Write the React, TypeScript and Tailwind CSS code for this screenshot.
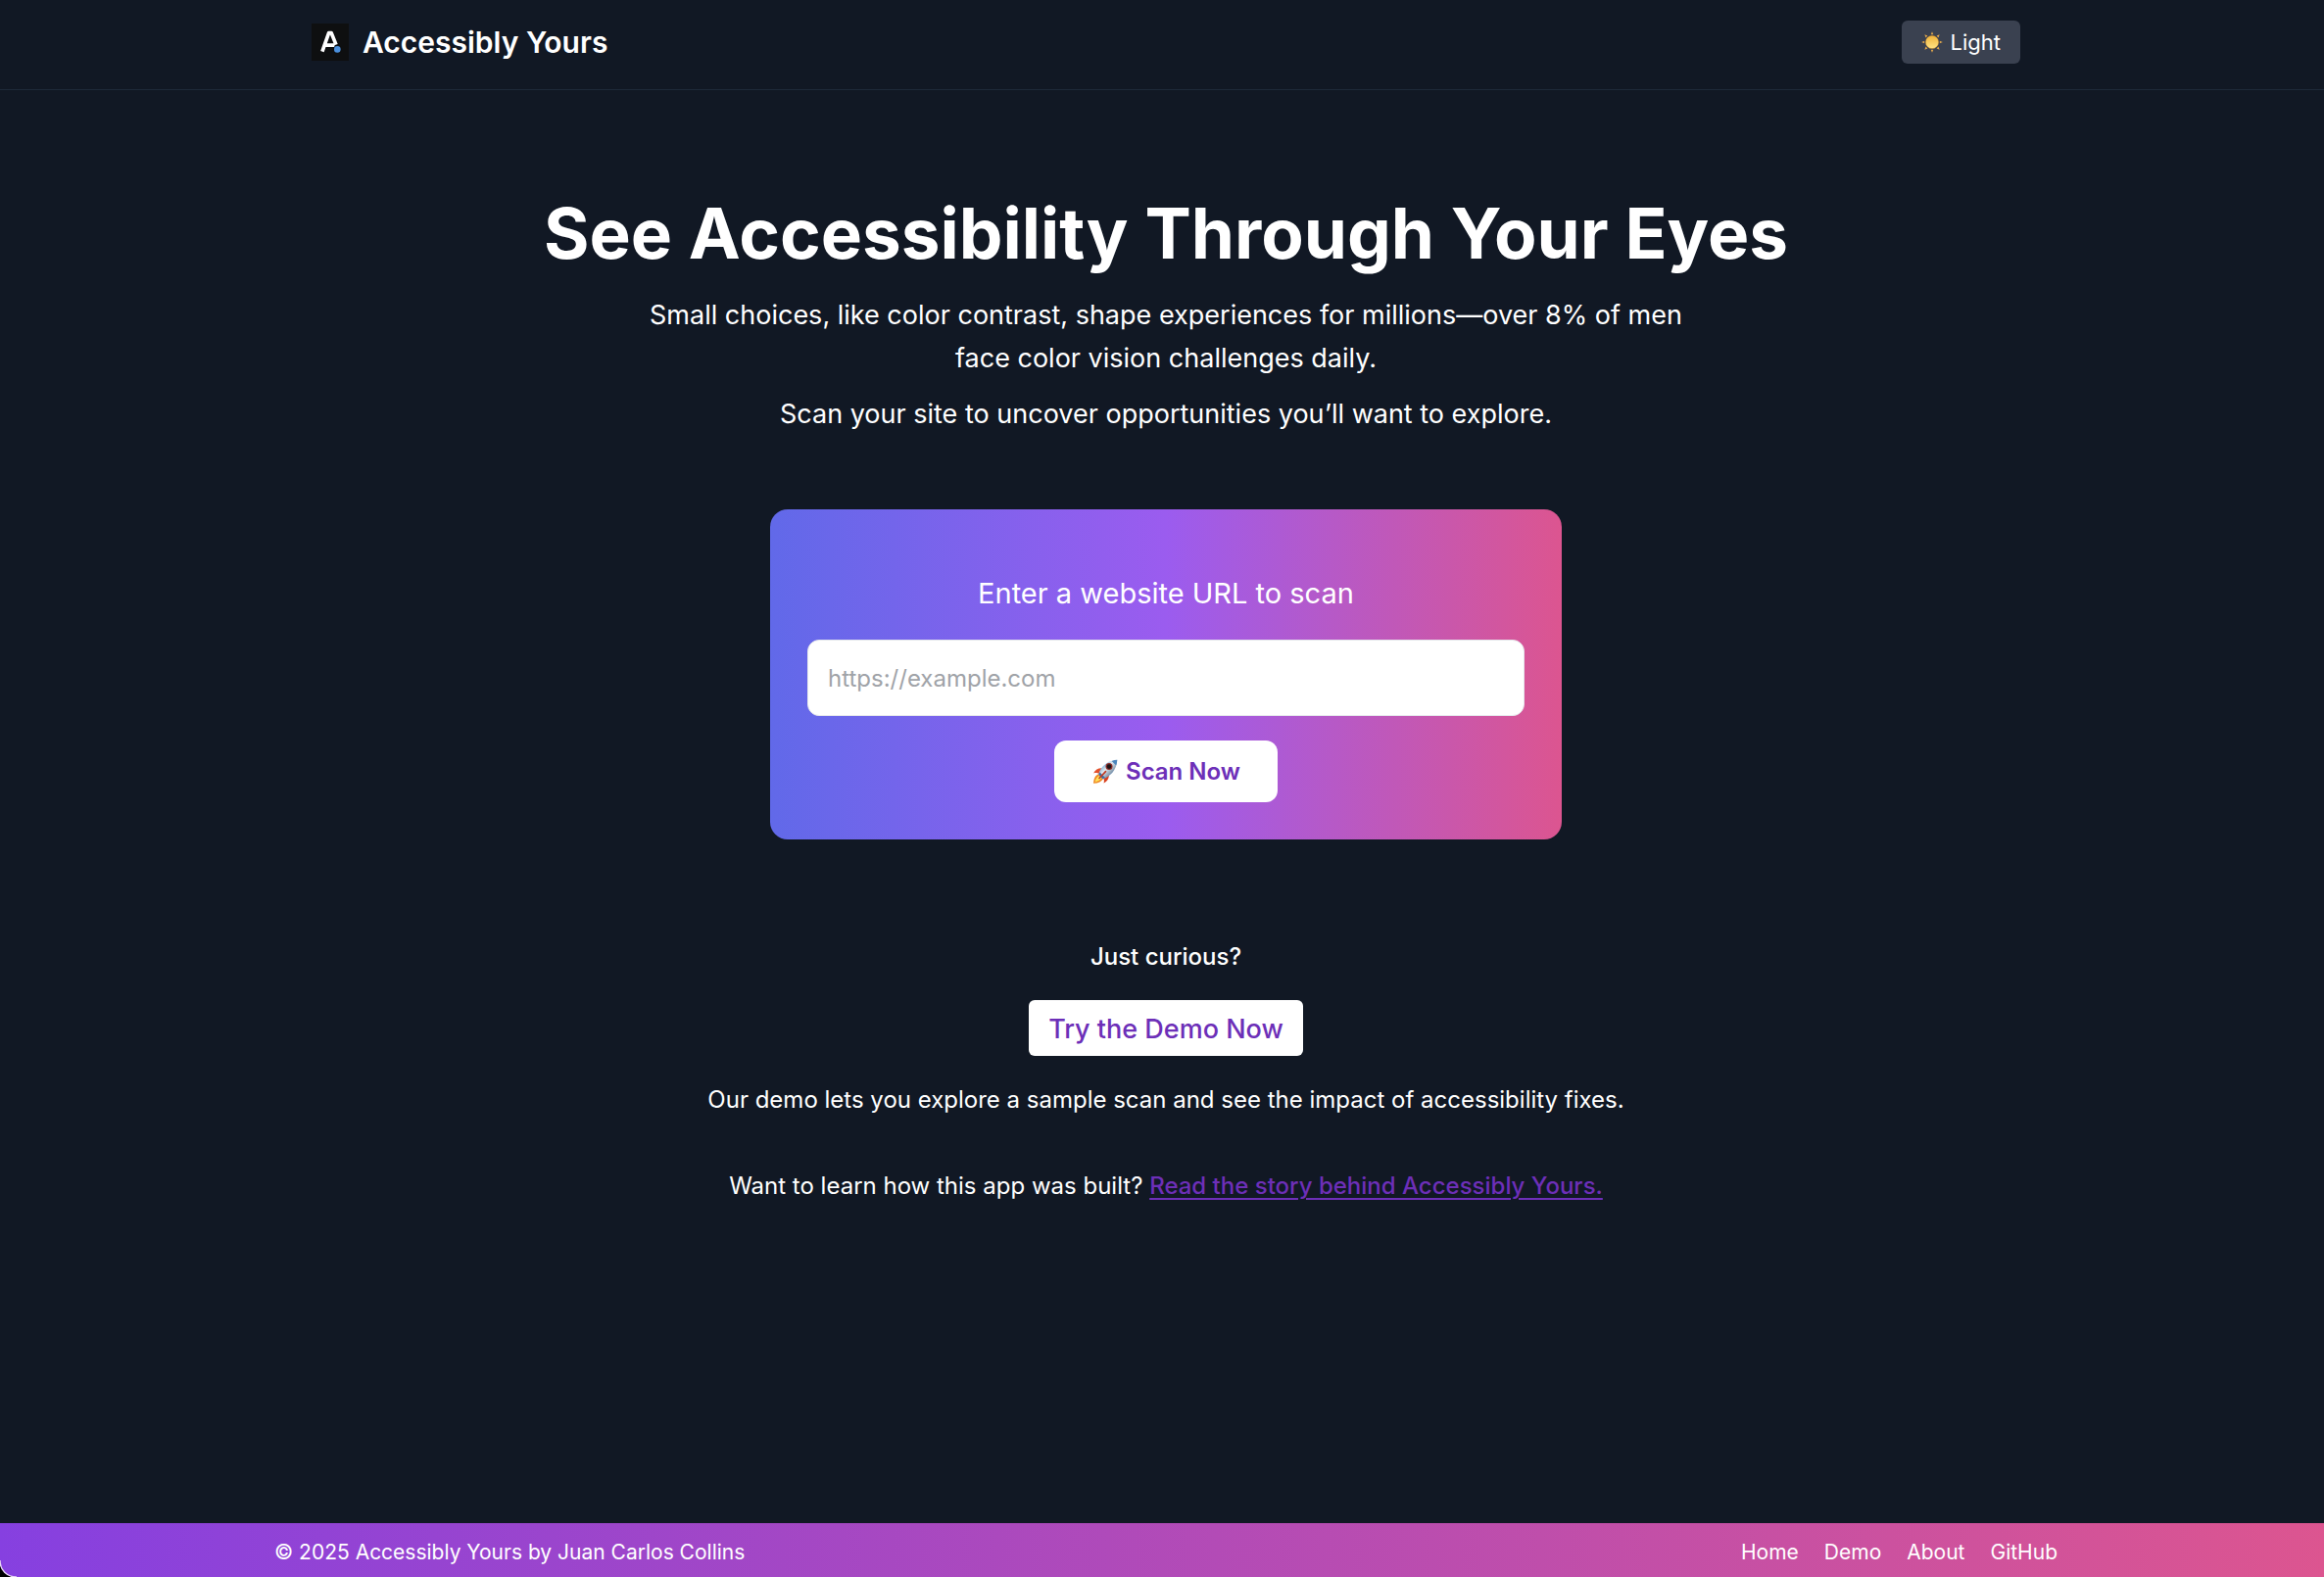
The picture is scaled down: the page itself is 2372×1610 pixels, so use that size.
import React from "react";

function LogoMark() {
  return (
    <svg viewBox="0 0 38 38" className="size-[38px]" aria-hidden="true">
      <rect width="38" height="38" fill="#0e0f10" />
      <path
        d="M10.9 28.6 L17.6 9.6 H20.2 L25 21.6 M13.6 22.2 H23.6"
        fill="none"
        stroke="#fff"
        strokeWidth="3.7"
        strokeLinejoin="round"
      />
      <circle cx="26.3" cy="26.4" r="4" fill="#0e0f10" />
      <circle cx="26.3" cy="26.4" r="3.3" fill="#4a8fdc" />
    </svg>
  );
}

const rays = [0, 45, 90, 135, 180, 225, 270, 315];

function SunIcon() {
  return (
    <svg viewBox="0 0 22 22" className="size-[22px]" aria-hidden="true">
      <defs>
        <linearGradient id="sun" x1="0" y1="0" x2="0" y2="1">
          <stop offset="0" stopColor="#f0b43a" />
          <stop offset="1" stopColor="#ffe384" />
        </linearGradient>
      </defs>
      {rays.map((angle) => (
        <path key={angle} d="M11 .2 L12.3 3.2 H9.7 Z" fill="#e0a64e" transform={`rotate(${angle} 11 11)`} />
      ))}
      <circle cx="11" cy="11" r="6.6" fill="url(#sun)" stroke="#c98a2a" strokeWidth=".5" />
    </svg>
  );
}

function RocketIcon() {
  return (
    <svg viewBox="0 0 28 28" className="size-7" aria-hidden="true">
      <defs>
        <linearGradient id="hull" x1="0.2" y1="0.2" x2="0.8" y2="0.8">
          <stop offset="0" stopColor="#5f9fd0" />
          <stop offset=".4" stopColor="#e3e9ee" />
          <stop offset=".75" stopColor="#8fa3b5" />
          <stop offset="1" stopColor="#3d6fa8" />
        </linearGradient>
      </defs>
      <path d="M2 15.5 C4 11.5 8 9.6 12 10.5 L8.5 16.5 C6 14.8 4 14.8 2 15.5 Z" fill="#e2502c" />
      <path d="M12.5 25.5 C16.5 23.5 18.4 20 17.6 16 L11.5 19.5 C13.2 21.6 13.2 23.6 12.5 25.5 Z" fill="#d9401f" />
      <path d="M7.5 16 C4 17.5 2.3 20.5 2 25.8 C7 25.6 10.5 24 12.3 20.5 Z" fill="#ef8a24" />
      <path d="M7.6 18 C5.2 19.4 4 21.6 3.6 24.4 C6.6 24 9 22.6 10.3 20.3 Z" fill="#ffe25a" />
      <path d="M7.2 16.8 C9 9.5 15 3 26.3 1.8 C25.6 12.5 19 19 11.6 21.2 Z" fill="url(#hull)" />
      <path d="M20.6 2.9 C22.4 2.2 24.3 1.9 26.3 1.8 C26.2 3.8 25.8 5.7 25.2 7.4 Z" fill="#4c86bd" />
      <path d="M7.2 16.8 L8.4 14.2 L14 19.9 L11.6 21.2 Z" fill="#3f6ea3" />
      <circle cx="18" cy="8.6" r="3.5" fill="#8d2b27" />
      <circle cx="18" cy="8.6" r="2.3" fill="#1d1416" />
      <path d="M8 20.5 L14.5 13.6" stroke="#c23a22" strokeWidth="1.6" strokeLinecap="round" />
    </svg>
  );
}

function WindowCorner() {
  return (
    <svg viewBox="0 0 18 18" className="absolute bottom-0 left-0 size-[18px]" aria-hidden="true">
      <path d="M0 1 C0 11 7 18 17 18 H0 Z" fill="#000" />
      <path d="M0 1 C0 11 7 18 17 18" fill="none" stroke="#e9d5f7" strokeWidth="1.4" />
    </svg>
  );
}

const footerLinks = ["Home", "Demo", "About", "GitHub"];

export default function App() {
  return (
    <div className="flex min-h-screen flex-col bg-[#111824] font-['Inter',sans-serif] text-white">
      <header className="flex justify-center border-b border-gray-800 pt-[21px] pb-[26px] pl-2">
        <div className="flex w-full max-w-[1744px] items-center justify-between">
          <a href="#home" className="flex items-center gap-[14px]">
            <LogoMark />
            <span className="text-[30px] leading-[44px] font-semibold">Accessibly Yours</span>
          </a>
          <button type="button" className="flex h-11 items-center gap-2 rounded-md bg-[#3a4150] px-5 text-[22px]">
            <SunIcon />
            Light
          </button>
        </div>
      </header>

      <main className="flex flex-col items-center pt-[106px] pb-16 pl-2 text-center">
        <h1 className="text-[71px] leading-[80px] font-bold">See Accessibility Through Your Eyes</h1>
        <p className="mt-[22px] max-w-[1070px] text-[27px] leading-[44px]">
          Small choices, like color contrast, shape experiences for millions—over 8% of men face color vision
          challenges daily.
        </p>
        <p className="mt-[13px] text-[27px] leading-[44px]">
          Scan your site to uncover opportunities you’ll want to explore.
        </p>

        <form
          onSubmit={(event) => event.preventDefault()}
          className="mt-[75px] flex w-full max-w-[808px] flex-col items-center rounded-[18px] bg-linear-to-r/srgb from-[#6169e9] via-[#9b5cef] to-[#dc5590] px-[38px] pt-[66px] pb-[38px]"
        >
          <label htmlFor="site-url" className="text-[29px] leading-[40px]">
            Enter a website URL to scan
          </label>
          <input
            id="site-url"
            type="url"
            placeholder="https://example.com"
            className="mt-[27px] h-[78px] w-full rounded-xl border border-gray-200 bg-white px-5 text-[24px] text-gray-900 placeholder:text-[#a0a3a8]"
          />
          <button
            type="submit"
            className="mt-[25px] flex h-[63px] items-center gap-[7px] rounded-xl bg-white px-[38px] text-[24px] font-semibold text-[#6d2fb8]"
          >
            <RocketIcon />
            Scan Now
          </button>
        </form>

        <p className="mt-[102px] text-[24px] leading-9 font-medium">Just curious?</p>
        <a
          href="#demo"
          className="mt-[26px] flex h-[57px] items-center rounded-md bg-white px-5 pt-1 text-[27px] font-medium text-[#6d2fb8]"
        >
          Try the Demo Now
        </a>
        <p className="mt-[27px] text-[24px] leading-9">
          Our demo lets you explore a sample scan and see the impact of accessibility fixes.
        </p>
        <p className="mt-[52px] text-[24px] leading-9">
          Want to learn how this app was built?{" "}
          <a href="#story" className="font-medium text-[#6d2fb8] underline decoration-2 underline-offset-4">
            Read the story behind Accessibly Yours.
          </a>
        </p>
      </main>

      <footer className="relative mt-auto flex justify-center bg-linear-to-r/srgb from-[#8640e0] to-[#dc5590] pt-[14px] pb-[9px] pl-2 text-[21px] leading-8">
        <WindowCorner />
        <div className="flex w-full max-w-[1820px] justify-between">
          <p>© 2025 Accessibly Yours by Juan Carlos Collins</p>
          <nav className="flex gap-[26px]">
            {footerLinks.map((name) => (
              <a key={name} href={`#${name.toLowerCase()}`}>
                {name}
              </a>
            ))}
          </nav>
        </div>
      </footer>
    </div>
  );
}
